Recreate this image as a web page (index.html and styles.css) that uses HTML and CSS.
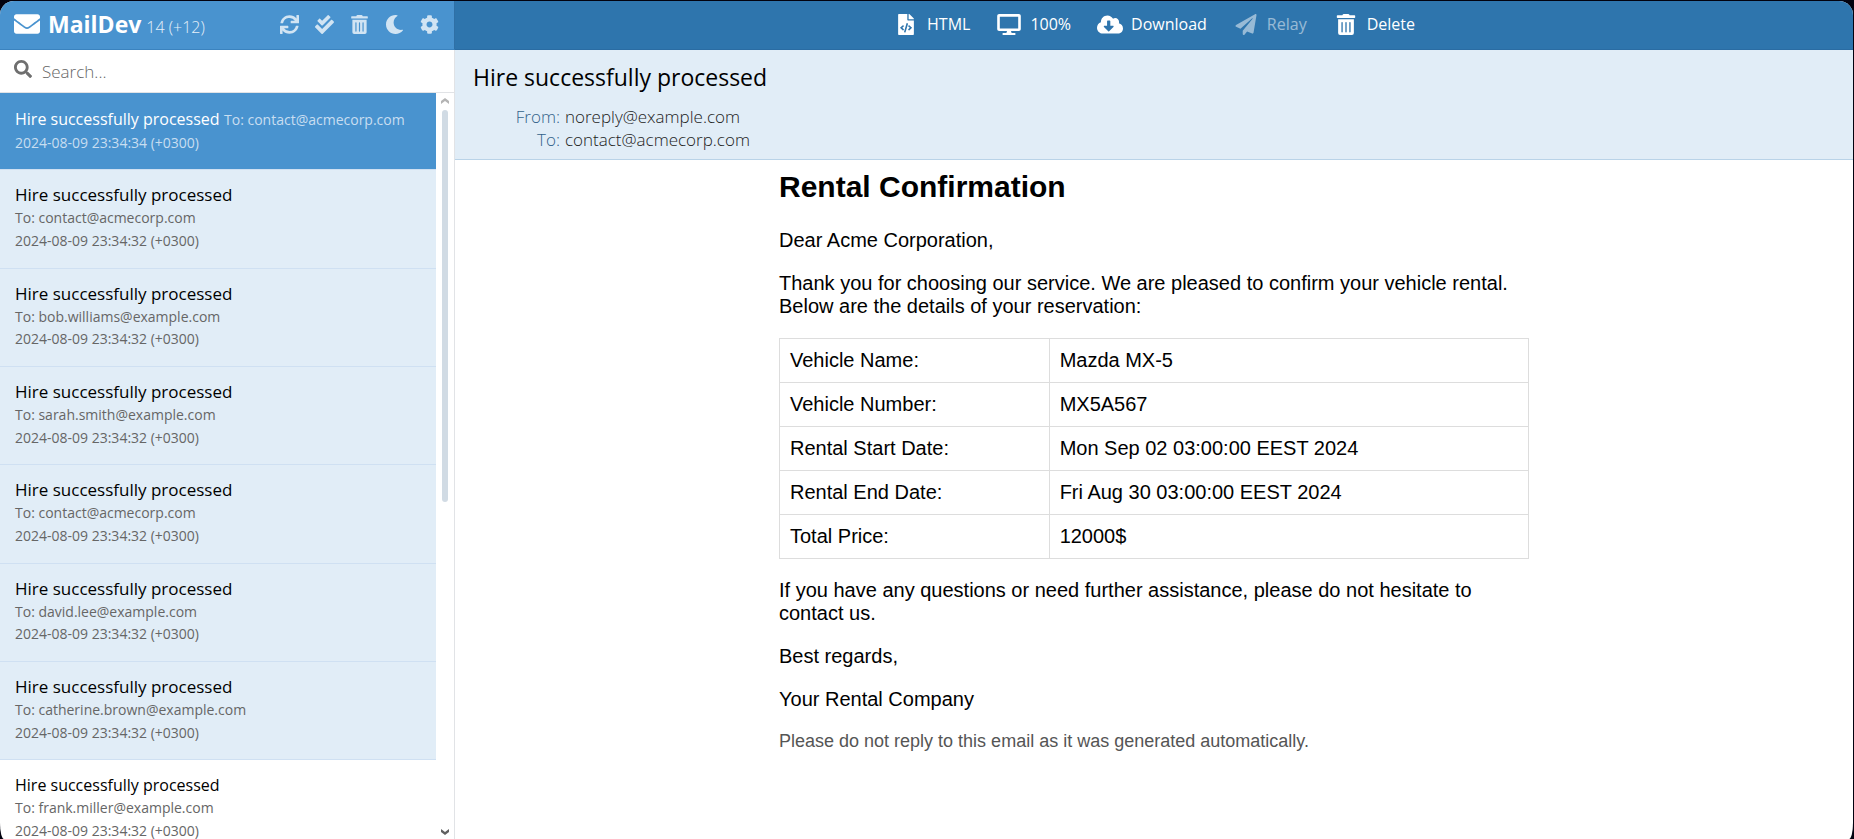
FILE: index.html
```html
<!DOCTYPE html>
<html lang="en">
<head>
<meta charset="utf-8">
<title>MailDev</title>
<link rel="stylesheet" href="styles.css">
</head>
<body>
<svg class="sprite" aria-hidden="true">
  <symbol id="envelope" viewBox="0 0 512 512"><path d="M502.3 190.8c3.9-3.1 9.7-.2 9.7 4.7V400c0 26.5-21.5 48-48 48H48c-26.5 0-48-21.5-48-48V195.6c0-5 5.7-7.8 9.7-4.7 22.4 17.4 52.1 39.5 154.1 113.6 21.1 15.4 56.7 47.8 92.2 47.6 35.7.3 72-32.8 92.3-47.6 102-74.1 131.6-96.3 154-113.7zM256 320c23.2.4 56.6-29.2 73.4-41.4 132.7-96.3 142.8-104.7 173.4-128.7 5.8-4.5 9.2-11.5 9.2-18.9v-19c0-26.5-21.5-48-48-48H48c-26.5 0-48 21.5-48 48v19c0 7.4 3.4 14.3 9.2 18.9 30.6 23.9 40.7 32.4 173.4 128.7 16.8 12.2 50.2 41.8 73.4 41.4z"/></symbol>
  <symbol id="search" viewBox="0 0 512 512"><path d="M505 442.7L405.3 343c-4.5-4.5-10.6-7-17-7H372c27.6-35.3 44-79.7 44-128C416 93.1 322.9 0 208 0S0 93.1 0 208s93.1 208 208 208c48.3 0 92.7-16.4 128-44v16.3c0 6.4 2.5 12.5 7 17l99.7 99.7c9.4 9.4 24.6 9.4 33.9 0l28.3-28.3c9.4-9.4 9.4-24.6.1-34zM208 336c-70.7 0-128-57.2-128-128 0-70.7 57.2-128 128-128 70.7 0 128 57.2 128 128 0 70.7-57.2 128-128 128z"/></symbol>
  <symbol id="sync" viewBox="0 0 512 512"><path d="M440.65 12.57l4 82.77A247.16 247.16 0 0 0 255.83 8C134.73 8 33.91 94.92 12.29 209.82A12 12 0 0 0 24.09 224h49.05a12 12 0 0 0 11.67-9.26 175.91 175.91 0 0 1 317-56.94l-101.46-4.86a12 12 0 0 0-12.57 12v47.41a12 12 0 0 0 12 12H500a12 12 0 0 0 12-12V12a12 12 0 0 0-12-12h-47.37a12 12 0 0 0-11.98 12.57zM255.83 432a175.61 175.61 0 0 1-146-77.8l101.8 4.87a12 12 0 0 0 12.57-12v-47.4a12 12 0 0 0-12-12H12a12 12 0 0 0-12 12V500a12 12 0 0 0 12 12h47.35a12 12 0 0 0 12-12.6l-4.15-82.57A247.17 247.17 0 0 0 255.83 504c121.11 0 221.93-86.92 243.55-201.82a12 12 0 0 0-11.8-14.18h-49.05a12 12 0 0 0-11.67 9.26A175.86 175.86 0 0 1 255.83 432z"/></symbol>
  <symbol id="check" viewBox="0 0 512 512"><path d="M505 174.8l-39.6-39.6c-9.4-9.4-24.6-9.4-33.9 0L192 374.7 80.6 263.2c-9.4-9.4-24.6-9.4-33.9 0L7 302.9c-9.4 9.4-9.4 24.6 0 34L175 505c9.4 9.4 24.6 9.4 33.9 0l296-296.2c9.4-9.5 9.4-24.7.1-34zm-324.3 106c6.2 6.3 16.4 6.3 22.6 0l208-208.2c6.2-6.3 6.2-16.4 0-22.6L366.1 4.7c-6.2-6.3-16.4-6.3-22.6 0L192 156.2l-55.4-55.5c-6.2-6.3-16.4-6.3-22.6 0L68.7 146c-6.2 6.3-6.2 16.4 0 22.6l112 112.2z"/></symbol>
  <symbol id="trash" viewBox="0 0 448 512"><path d="M32 464a48 48 0 0 0 48 48h288a48 48 0 0 0 48-48V128H32zm272-256a16 16 0 0 1 32 0v224a16 16 0 0 1-32 0zm-96 0a16 16 0 0 1 32 0v224a16 16 0 0 1-32 0zm-96 0a16 16 0 0 1 32 0v224a16 16 0 0 1-32 0zM432 32H312l-9.4-18.7A24 24 0 0 0 281.1 0H166.8a23.72 23.72 0 0 0-21.4 13.3L136 32H16A16 16 0 0 0 0 48v32a16 16 0 0 0 16 16h416a16 16 0 0 0 16-16V48a16 16 0 0 0-16-16z"/></symbol>
  <symbol id="moon" viewBox="0 0 512 512"><path d="M283.211 512c78.962 0 151.079-35.925 198.857-94.792 7.068-8.708-.639-21.43-11.562-19.35-124.203 23.654-238.262-71.576-238.262-196.954 0-72.222 38.662-138.635 101.498-174.394 9.686-5.512 7.25-20.197-3.756-22.23A258.156 258.156 0 0 0 283.211 0c-141.309 0-256 114.511-256 256 0 141.309 114.511 256 256 256z"/></symbol>
  <symbol id="cog" viewBox="0 0 512 512"><path d="M487.4 315.7l-42.6-24.6c4.3-23.2 4.3-47 0-70.2l42.6-24.6c4.9-2.8 7.1-8.6 5.5-14-11.1-35.6-30-67.8-54.7-94.6-3.8-4.1-10-5.1-14.8-2.3L380.8 110c-17.9-15.4-38.5-27.3-60.8-35.1V25.8c0-5.6-3.9-10.5-9.4-11.7-36.7-8.2-74.3-7.8-109.2 0-5.5 1.2-9.4 6.1-9.4 11.7V75c-22.2 7.9-42.8 19.8-60.8 35.1L88.7 85.5c-4.9-2.8-11-1.9-14.8 2.3-24.7 26.7-43.6 58.9-54.7 94.6-1.7 5.4.6 11.2 5.5 14L67.3 221c-4.3 23.2-4.3 47 0 70.2l-42.6 24.6c-4.9 2.8-7.1 8.6-5.5 14 11.1 35.6 30 67.8 54.7 94.6 3.8 4.1 10 5.1 14.8 2.3l42.6-24.6c17.9 15.4 38.5 27.3 60.8 35.1v49.2c0 5.6 3.9 10.5 9.4 11.7 36.7 8.2 74.3 7.8 109.2 0 5.5-1.2 9.4-6.1 9.4-11.7v-49.2c22.2-7.9 42.8-19.8 60.8-35.1l42.6 24.6c4.9 2.8 11 1.9 14.8-2.3 24.7-26.7 43.6-58.9 54.7-94.6 1.5-5.5-.7-11.3-5.6-14.1zM256 336c-44.1 0-80-35.9-80-80s35.9-80 80-80 80 35.9 80 80-35.9 80-80 80z"/></symbol>
  <symbol id="file" viewBox="0 0 384 512"><path d="M384 121.941V128H256V0h6.059c6.365 0 12.47 2.529 16.971 7.029l97.941 97.941A24.005 24.005 0 0 1 384 121.941zM248 160c-13.2 0-24-10.8-24-24V0H24C10.745 0 0 10.745 0 24v464c0 13.255 10.745 24 24 24h336c13.255 0 24-10.745 24-24V160H248zM123.206 400.505a5.4 5.4 0 0 1-7.633.246l-64.866-60.812a5.4 5.4 0 0 1 0-7.879l64.866-60.812a5.4 5.4 0 0 1 7.633.246l19.579 20.885a5.4 5.4 0 0 1-.372 7.747L101.65 336l40.763 35.874a5.4 5.4 0 0 1 .372 7.747l-19.579 20.884zm51.295 50.479l-27.453-7.97a5.402 5.402 0 0 1-3.681-6.692l61.44-211.626a5.402 5.402 0 0 1 6.692-3.681l27.452 7.97a5.4 5.4 0 0 1 3.68 6.692l-61.44 211.626a5.397 5.397 0 0 1-6.69 3.681zm160.792-111.045l-64.866 60.812a5.4 5.4 0 0 1-7.633-.246l-19.58-20.885a5.4 5.4 0 0 1 .372-7.747L284.35 336l-40.763-35.874a5.4 5.4 0 0 1-.372-7.747l19.58-20.885a5.4 5.4 0 0 1 7.633-.246l64.866 60.812a5.4 5.4 0 0 1-.001 7.879z"/></symbol>
  <symbol id="desktop" viewBox="0 0 576 512"><path d="M528 0H48C21.5 0 0 21.5 0 48v320c0 26.5 21.5 48 48 48h192l-16 48h-72c-13.3 0-24 10.7-24 24s10.7 24 24 24h272c13.3 0 24-10.7 24-24s-10.7-24-24-24h-72l-16-48h192c26.5 0 48-21.5 48-48V48c0-26.5-21.5-48-48-48zm-16 352H64V64h448v288z"/></symbol>
  <symbol id="cloud" viewBox="0 0 640 512"><path d="M537.6 226.6c4.1-10.7 6.4-22.4 6.4-34.6 0-53-43-96-96-96-19.7 0-38.1 6-53.3 16.2C367 64.2 315.3 32 256 32c-88.4 0-160 71.6-160 160 0 2.7.1 5.4.2 8.1C40.2 219.8 0 273.2 0 336c0 79.5 64.5 144 144 144h368c70.7 0 128-57.3 128-128 0-61.9-44-113.6-102.4-125.4zm-132.9 88.7L299.3 420.7c-6.2 6.2-16.4 6.2-22.6 0L171.3 315.3c-10.1-10.1-2.9-27.3 11.3-27.3H248V176c0-8.8 7.2-16 16-16h48c8.8 0 16 7.2 16 16v112h65.4c14.2 0 21.4 17.2 11.3 27.3z"/></symbol>
  <symbol id="plane" viewBox="0 0 512 512"><path d="M476 3.2L12.5 270.6c-18.1 10.4-15.8 35.6 2.2 43.2L121 358.4l287.3-253.2c5.5-4.9 13.3 2.6 8.6 8.3L176 407v80.5c0 23.6 28.5 32.9 42.5 15.8L282 426l124.6 52.2c14.2 6 30.4-2.9 33-18.2l72-432C515 7.8 493.3-6.8 476 3.2z"/></symbol>
  <symbol id="chevron" viewBox="0 0 8 6"><path d="M0 3V0L4 3L8 0V3L4 6Z"/></symbol>
</svg>

<div class="app">
  <aside class="sidebar">
    <header class="brand-bar">
      <svg class="brand-icon"><use href="#envelope"/></svg>
      <h1 class="brand">MailDev</h1>
      <span class="count">14 (+12)</span>
      <nav class="actions" aria-label="Mailbox">
        <button class="action" type="button" aria-label="Refresh"><svg><use href="#sync"/></svg></button>
        <button class="action" type="button" aria-label="Mark all as read"><svg><use href="#check"/></svg></button>
        <button class="action" type="button" aria-label="Delete all"><svg><use href="#trash"/></svg></button>
        <button class="action" type="button" aria-label="Dark mode"><svg><use href="#moon"/></svg></button>
        <button class="action" type="button" aria-label="Settings"><svg><use href="#cog"/></svg></button>
      </nav>
    </header>
    <label class="search">
      <svg class="search-icon"><use href="#search"/></svg>
      <input class="search-input" type="text" placeholder="Search..." aria-label="Search">
    </label>
    <div class="mailbox">
      <ul class="mails">
        <li><a class="mail selected" href="#"><span class="title">Hire successfully processed</span> <span class="meta">To: contact@acmecorp.com</span><span class="meta date">2024-08-09 23:34:34 (+0300)</span></a></li>
        <li><a class="mail unread" href="#"><span class="title">Hire successfully processed</span><span class="meta">To: contact@acmecorp.com</span><span class="meta">2024-08-09 23:34:32 (+0300)</span></a></li>
        <li><a class="mail unread" href="#"><span class="title">Hire successfully processed</span><span class="meta">To: bob.williams@example.com</span><span class="meta">2024-08-09 23:34:32 (+0300)</span></a></li>
        <li><a class="mail unread" href="#"><span class="title">Hire successfully processed</span><span class="meta">To: sarah.smith@example.com</span><span class="meta">2024-08-09 23:34:32 (+0300)</span></a></li>
        <li><a class="mail unread" href="#"><span class="title">Hire successfully processed</span><span class="meta">To: contact@acmecorp.com</span><span class="meta">2024-08-09 23:34:32 (+0300)</span></a></li>
        <li><a class="mail unread" href="#"><span class="title">Hire successfully processed</span><span class="meta">To: david.lee@example.com</span><span class="meta">2024-08-09 23:34:32 (+0300)</span></a></li>
        <li><a class="mail unread" href="#"><span class="title">Hire successfully processed</span><span class="meta">To: catherine.brown@example.com</span><span class="meta">2024-08-09 23:34:32 (+0300)</span></a></li>
        <li><a class="mail" href="#"><span class="title">Hire successfully processed</span><span class="meta">To: frank.miller@example.com</span><span class="meta">2024-08-09 23:34:32 (+0300)</span></a></li>
      </ul>
      <div class="scrollbar" aria-hidden="true">
        <svg class="arrow up"><use href="#chevron"/></svg>
        <div class="track"><div class="thumb"></div></div>
        <svg class="arrow"><use href="#chevron"/></svg>
      </div>
    </div>
  </aside>

  <main class="main">
    <nav class="toolbar" aria-label="Message">
      <button class="tool" type="button"><svg class="tool-icon"><use href="#file"/></svg>HTML</button>
      <button class="tool" type="button"><svg class="tool-icon"><use href="#desktop"/></svg>100%</button>
      <button class="tool" type="button"><svg class="tool-icon"><use href="#cloud"/></svg>Download</button>
      <button class="tool" type="button" disabled><svg class="tool-icon"><use href="#plane"/></svg>Relay</button>
      <button class="tool" type="button"><svg class="tool-icon"><use href="#trash"/></svg>Delete</button>
    </nav>
    <header class="message-head">
      <h2 class="subject">Hire successfully processed</h2>
      <dl class="fields">
        <dt>From:</dt><dd>noreply@example.com</dd>
        <dt>To:</dt><dd>contact@acmecorp.com</dd>
      </dl>
    </header>
    <article class="letter">
      <h2 class="letter-title">Rental Confirmation</h2>
      <p>Dear Acme Corporation,</p>
      <p>Thank you for choosing our service. We are pleased to confirm your vehicle rental. Below are the details of your reservation:</p>
      <table class="details">
        <tr><td>Vehicle Name:</td><td>Mazda MX-5</td></tr>
        <tr><td>Vehicle Number:</td><td>MX5A567</td></tr>
        <tr><td>Rental Start Date:</td><td>Mon Sep 02 03:00:00 EEST 2024</td></tr>
        <tr><td>Rental End Date:</td><td>Fri Aug 30 03:00:00 EEST 2024</td></tr>
        <tr><td>Total Price:</td><td>12000$</td></tr>
      </table>
      <p>If you have any questions or need further assistance, please do not hesitate to contact us.</p>
      <p>Best regards,</p>
      <p>Your Rental Company</p>
      <p class="note">Please do not reply to this email as it was generated automatically.</p>
    </article>
  </main>
</div>
</body>
</html>
```
FILE: styles.css
```css
* { box-sizing: border-box; }

body {
  margin: 0;
  padding: 1px 1px 0 0;
  height: 100vh;
  background: #02020f;
  font-family: "Open Sans", "Noto Sans", sans-serif;
  font-size: 17px;
  color: #000;
}

h1, h2, p, ul, dl, dd { margin: 0; padding: 0; }
ul { list-style: none; }
a { color: inherit; text-decoration: none; }
button { border: 0; padding: 0; background: none; font: inherit; color: inherit; }
svg { fill: currentColor; flex: none; }
.sprite { display: none; }

.app {
  display: flex;
  height: 100%;
  overflow: hidden;
  background: #fff;
  border-radius: 14px 14px 4px 4px / 14px 14px 16px 16px;
}

/* Sidebar */
.sidebar {
  display: flex;
  flex-direction: column;
  width: 455px;
  flex: none;
  border-right: 1px solid #e1e3e6;
}

.brand-bar {
  display: flex;
  align-items: center;
  height: 49px;
  flex: none;
  margin-right: -1px;
  padding: 0 7px 2px 14px;
  background: #4993cf;
  border-bottom: 1px solid #3b83bf;
  border-right: 1px solid #2f70a6;
  color: #fff;
}
.brand-icon { width: 26px; height: 26px; }
.brand { margin-left: 8px; font-size: 23px; line-height: 32px; font-weight: 700; }
.count { margin-left: 5px; padding-top: 5px; font-size: 16px; font-weight: 300; color: #e6f0f9; }

.actions { display: flex; margin-left: auto; }
.action { display: flex; justify-content: center; width: 35px; color: #d1e4f3; }
.action svg { width: 19px; height: 19px; }

.search {
  display: flex;
  align-items: center;
  height: 43px;
  flex: none;
  padding-left: 14px;
  border-bottom: 1px solid #e1e3e6;
}
.search-icon { width: 18px; height: 18px; margin-bottom: 4px; color: #6f6f6f; }
.search-input {
  flex: 1;
  min-width: 0;
  margin-left: 8px;
  padding: 3px 2px 2px;
  border: 0;
  outline: 0;
  font: inherit;
  font-weight: 300;
}
.search-input::placeholder { color: #666; }

.mailbox { display: flex; flex: 1; min-height: 0; }
.mails { flex: 1; overflow: hidden; }

.mail {
  display: block;
  padding: 13px 15px 15px;
  border-bottom: 1px solid #cfe0f2;
}
.mail .title, .mail .meta { display: block; }
.title { font-size: 16px; line-height: 24px; }
.meta { font-size: 14px; line-height: 1.62; color: #666; }
.unread { background: #e1edf7; }
.unread .title { font-size: 17px; font-weight: 500; }
.selected { padding-top: 14px; background: #4993cf; color: #fff; white-space: nowrap; }
.selected .title, .selected .meta { display: inline; }
.selected .meta { color: #c8def1; }
.selected .date { display: block; }

.scrollbar {
  display: flex;
  flex-direction: column;
  align-items: center;
  width: 18px;
  padding: 5px 0 4px;
  color: #606060;
}
.arrow { width: 8px; height: 6px; }
.arrow.up { transform: rotate(180deg); color: #b4b4b4; }
.track { flex: 1; width: 6px; margin: 6px 0; }
.thumb { height: 55%; border-radius: 3px; background: #d1dbe4; }

/* Message */
.main { flex: 1; min-width: 0; }

.toolbar {
  display: flex;
  justify-content: center;
  gap: 26px;
  height: 49px;
  padding-bottom: 2px;
  background: #2e75ad;
  border-bottom: 1px solid #2a6ca3;
  color: #fff;
  font-size: 16px;
}
.tool { display: flex; align-items: center; gap: 8px; }
.tool:disabled { opacity: .5; }
.tool-icon { width: 26px; height: 21px; }

.message-head {
  padding: 10px 18px 8px;
  background: #e1edf7;
  border-bottom: 1px solid #b9d3e8;
}
.subject { font-size: 23px; line-height: 34px; font-weight: 400; }
.fields {
  display: grid;
  grid-template-columns: 87px 1fr;
  column-gap: 5px;
  margin-top: 11px;
  line-height: 23px;
  font-weight: 300;
}
.fields dt { text-align: right; color: #33628a; }
.fields dd { color: #222; }

.letter {
  max-width: 750px;
  margin: 0 auto;
  padding-top: 9px;
  font: 20px/23px "Liberation Sans", Arial, sans-serif;
}
.letter-title { font-size: 30px; line-height: 36px; margin-bottom: 24px; }
.letter p { margin-bottom: 20px; }
.details { width: 100%; margin-bottom: 20px; border-collapse: collapse; }
.details td { padding: 10px; border: 1px solid #ddd; }
.details td:first-child { width: 36%; }
.letter .note { font-size: 18px; line-height: 21px; color: #555; }
```
